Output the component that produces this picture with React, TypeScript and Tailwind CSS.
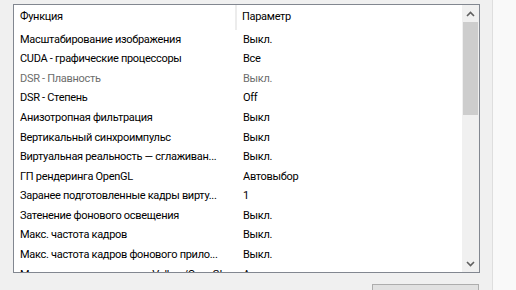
import React from "react";

const rows: { name: string; value: string; disabled?: boolean }[] = [
  { name: "Масштабирование изображения", value: "Выкл." },
  { name: "CUDA - графические процессоры", value: "Все" },
  { name: "DSR - Плавность", value: "Выкл.", disabled: true },
  { name: "DSR - Степень", value: "Off" },
  { name: "Анизотропная фильтрация", value: "Выкл" },
  { name: "Вертикальный синхроимпульс", value: "Выкл" },
  { name: "Виртуальная реальность — сглаживан...", value: "Выкл." },
  { name: "ГП рендеринга OpenGL", value: "Автовыбор" },
  { name: "Заранее подготовленные кадры вирту...", value: "1" },
  { name: "Затенение фонового освещения", value: "Выкл." },
  { name: "Макс. частота кадров", value: "Выкл." },
  { name: "Макс. частота кадров фонового прило...", value: "Выкл." },
  { name: "Метод представления для Vulkan/OpenGL", value: "Авто" },
];

const Chevron = ({ up }: { up?: boolean }) => (
  <svg width="9" height="6" viewBox="0 0 9 6" className="block">
    <path
      d={up ? "M1 5 L4.5 1.5 L8 5" : "M1 1 L4.5 4.5 L8 1"}
      fill="none"
      stroke="#606060"
      strokeWidth="1.6"
    />
  </svg>
);

export default function App() {
  return (
    <div
      className="w-[516px] h-[290px] overflow-hidden bg-[#f0f0f0] flex text-[11px] tracking-[-0.3px] text-black"
      style={{ fontFamily: 'Roboto, "Liberation Sans", Arial, sans-serif' }}
    >
      <div className="w-[492px] flex-none flex flex-col">
        <div className="ml-[13px] mt-[4px] w-[467px] h-[269px] flex-none border border-[#828790] bg-white flex overflow-hidden">
          <div className="w-[448px] flex-none flex flex-col">
            <div className="h-[25px] flex-none flex items-center">
              <div className="w-[223px] h-full flex items-center pl-[6px] border-r-2 border-[#ececec]">
                Функция
              </div>
              <div className="flex-1 pl-[5px]">Параметр</div>
            </div>
            {rows.map((r) => (
              <div
                key={r.name}
                className={`h-[19.6px] flex-none flex items-center ${
                  r.disabled ? "text-[#6d6d6d]" : "text-black"
                }`}
              >
                <div className="w-[223px] pl-[6px] whitespace-nowrap overflow-hidden">
                  {r.name}
                </div>
                <div className="flex-1 pl-[6px] whitespace-nowrap">{r.value}</div>
              </div>
            ))}
          </div>
          <div className="w-[17px] flex-none bg-[#f0f0f0] flex flex-col">
            <div className="h-[17px] flex-none flex items-center justify-center">
              <Chevron up />
            </div>
            <div className="flex-1 px-[1px]">
              <div className="h-[93px] bg-[#cdcdcd]" />
            </div>
            <div className="h-[17px] flex-none flex items-center justify-center">
              <Chevron />
            </div>
          </div>
        </div>
        <div className="ml-[372px] mt-[11px] w-[107px] h-[23px] flex-none border border-[#adadad] bg-[#e1e1e1] flex items-center gap-[6px] pl-[7px]">
          <div className="w-[8px] h-[8px] bg-[#76b900]" />
          <span>Восстановить</span>
        </div>
      </div>
      <div className="flex-1 border-l border-[#dedede] bg-[#f9f9f9]" />
    </div>
  );
}
